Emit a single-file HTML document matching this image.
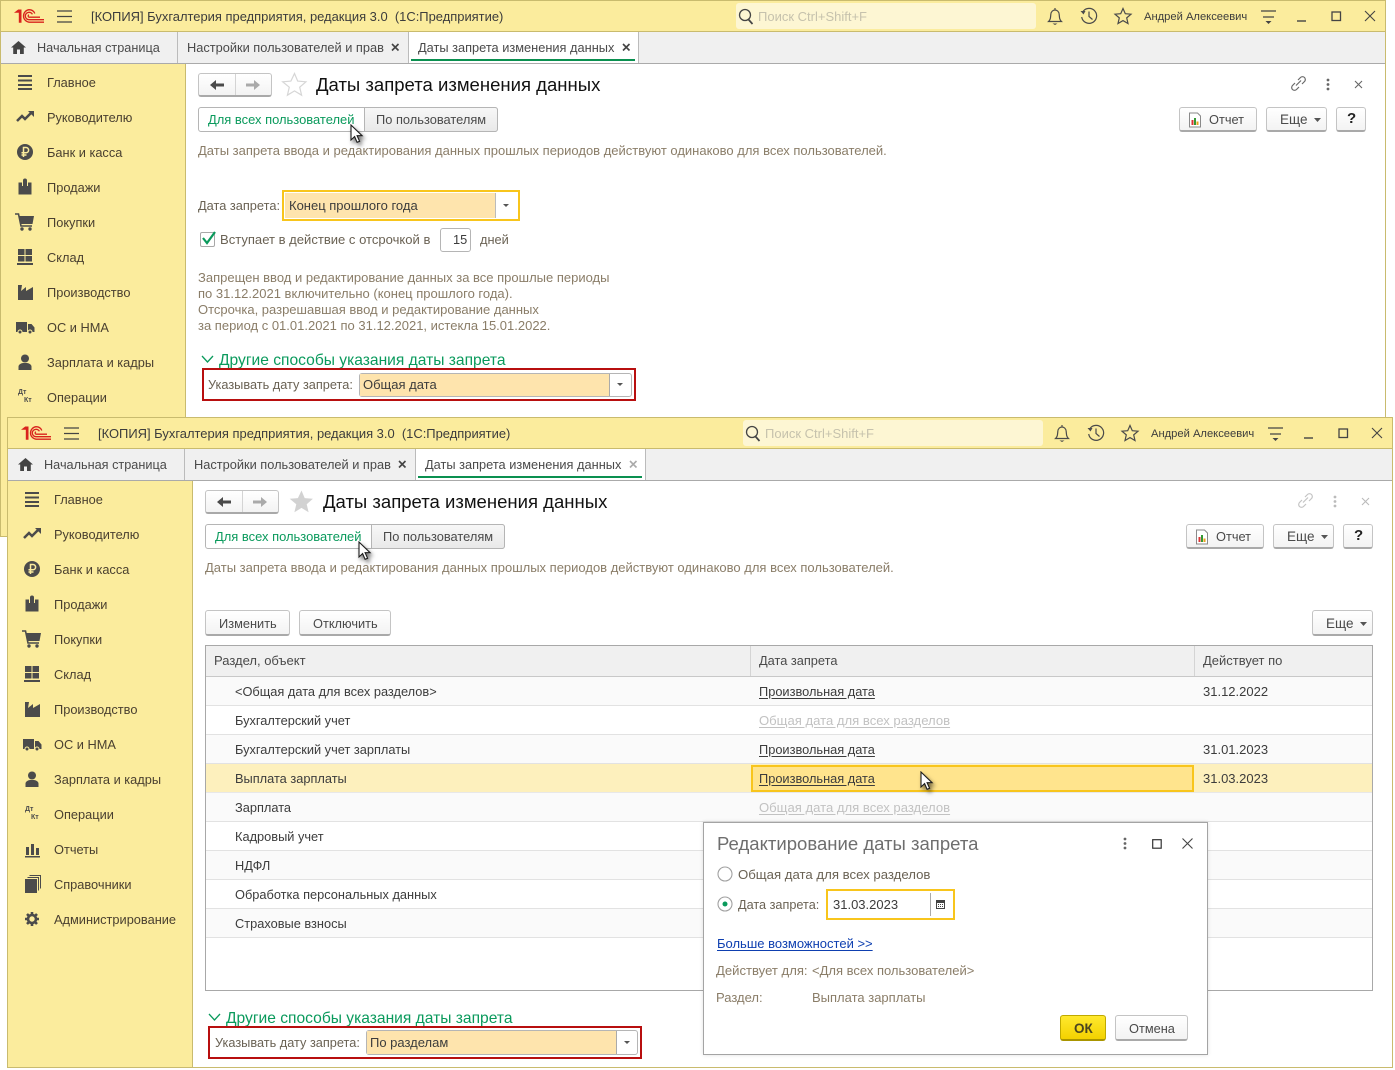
<!DOCTYPE html>
<html lang="ru"><head><meta charset="utf-8"><title>Даты запрета изменения данных</title>
<style>
html,body{margin:0;padding:0;background:#fff;width:1395px;height:1070px;overflow:hidden}
body{position:relative;font-family:"Liberation Sans",Arial,sans-serif;font-size:12.800px;color:#4a4a4a}
.win{position:absolute;width:1386px;background:#fff;overflow:hidden;box-sizing:border-box;border:1px solid #c9bb6e}
.in{position:absolute;left:-1px;top:-1px;width:1386px;height:700px}
.b{position:absolute;box-sizing:border-box}
.t{position:absolute;white-space:nowrap;line-height:16px;height:16px}
.hd{background:#fbec9d}
.tabs{background:#f0f0f0;border-bottom:1px solid #aaa}
.sb{background:#fbec9d;border-right:1px solid #c9bb6e}
.btn{position:absolute;box-sizing:border-box;border:1px solid #c4c4c4;border-bottom:2px solid #a9a9a9;border-radius:3px;background:linear-gradient(#fff,#f3f3f3)}
.nav{color:#4a4030}
.gr{color:#8a7d68;font-size:13px}
.lb{color:#6a6254}
.dk{color:#3c3c3c}
.gn{color:#0a9a5c}
u{text-underline-offset:2px}
svg{position:absolute;overflow:visible}
.ic{fill:#4b4b4b}
.ln{fill:none;stroke:#4a4a4a;stroke-width:1.2}
.cur{filter:drop-shadow(2px 3px 2px rgba(0,0,0,.55))}
.row{position:absolute;left:199px;width:1166px;height:29px;background:#fafafa;border-bottom:1px solid #e2e2e2;box-sizing:border-box}
</style></head><body>
<svg width="0" height="0" style="position:absolute">
<defs>
<symbol id="i1" viewBox="0 0 20 20"><path class="ic" d="M3 3h14v2H3zM3 7.500h14v2H3zM3 12h14v2H3zM3 16h14v2H3z"/></symbol>
<symbol id="i2" viewBox="0 0 20 20"><path d="M2 14l5-5 3 3 6-6" fill="none" stroke="#4b4b4b" stroke-width="2.500"/><path class="ic" d="M13 4h6v6z"/></symbol>
<symbol id="i3" viewBox="0 0 20 20"><circle class="ic" cx="10" cy="10" r="8"/><path d="M8.500 15V5.500h2.500a2.500 2.500 0 0 1 0 5.200H6.500M6.500 13h5" fill="none" stroke="#fbec9d" stroke-width="1.500"/></symbol>
<symbol id="i4" viewBox="0 0 20 20"><path class="ic" d="M3.500 5.500h3.500V9h1V3.500a2 2 0 0 1 4 0V9h1V5.500h3.500V17.500h-13z"/></symbol>
<symbol id="i5" viewBox="0 0 20 20"><path class="ic" d="M4 4h15l-1.500 8H6z"/><path d="M0 2h3.500l2.500 12h11" fill="none" stroke="#4b4b4b" stroke-width="1.600"/><circle class="ic" cx="7" cy="17" r="1.700"/><circle class="ic" cx="15" cy="17" r="1.700"/></symbol>
<symbol id="i6" viewBox="0 0 20 20"><path class="ic" d="M3 2h6.500v6H3zM10.500 2H17v6h-6.500zM3 9h6.500v5.500H3zM10.500 9H17v5.500h-6.500zM2 16h16v2H2z"/></symbol>
<symbol id="i7" viewBox="0 0 20 20"><path class="ic" d="M3 18V3h4l-1 6 5-4v4l7-4v13z"/></symbol>
<symbol id="i8" viewBox="0 0 20 20"><path class="ic" d="M1 5h11v10H1zM13 7h3.500l3 3.500V15H13z"/><circle cx="5" cy="15" r="2" fill="#4b4b4b" stroke="#fbec9d"/><circle cx="15" cy="15" r="2" fill="#4b4b4b" stroke="#fbec9d"/></symbol>
<symbol id="i9" viewBox="0 0 20 20"><circle class="ic" cx="10" cy="6.500" r="4"/><path class="ic" d="M3.500 18v-3.500c0-2 3-3.500 4.500-3.500h4c1.500 0 4.500 1.500 4.500 3.500V18z"/></symbol>
<symbol id="i11" viewBox="0 0 20 20"><path class="ic" d="M4 8h3v8H4zM9 5h3v11H9zM14 9h3v7h-3zM3 17h15v1.500H3z"/></symbol>
<symbol id="i12" viewBox="0 0 20 20"><path class="ic" d="M3 5h12v14H3z"/><path d="M5.500 3.500h11v13M7.500 1.500H18.500v13" fill="none" stroke="#4b4b4b"/></symbol>
<symbol id="i13" viewBox="0 0 20 20"><path d="M10 3v2.500M10 14.500V17M3 10h2.500M14.500 10H17M5 5l1.800 1.800M13.200 13.200L15 15M15 5l-1.800 1.800M6.800 13.200L5 15" stroke="#4b4b4b" stroke-width="2.600"/><circle cx="10" cy="10" r="4" fill="none" stroke="#4b4b4b" stroke-width="2.600"/></symbol>
<symbol id="cur" viewBox="0 0 14 20"><path d="M1 1v15l3.600-3.400 2.500 5.700 2.500-1-2.500-5.600h5z" fill="#fff" stroke="#1c1c1c" stroke-width="1.100"/></symbol>
<symbol id="logo" viewBox="0 0 30 14"><path d="M0 3.800L4.200.5H7.500V13.800H4.800V3.800z" fill="#d9231d"/><path d="M30 13.200H15a6.300 6.300 0 0 1 0-12.500c2.800 0 4.800 1.400 5.800 3.800" fill="none" stroke="#d9231d" stroke-width="1.300"/><path d="M30 10.700H15a3.700 3.700 0 0 1 0-7.400c1.600 0 2.800.8 3.400 2" fill="none" stroke="#d9231d" stroke-width="1.300"/><path d="M26 8.200H15a1.200 1.200 0 0 1 0-2.300" fill="none" stroke="#d9231d" stroke-width="1.300"/></symbol>
<symbol id="bell" viewBox="0 0 20 20"><path class="ln" d="M3.500 15.500c2-2 2-3.500 2.300-7C6 5.500 8 4 10 4s4 1.500 4.200 4.500c.3 3.500.3 5 2.300 7zM10 2v2"/><path class="ic" d="M7.500 17.500h5L10 19z"/></symbol>
<symbol id="hist" viewBox="0 0 20 20"><path class="ln" d="M4 5.500A7.500 7.500 0 1 1 2.700 11M10 5.500V10.500l3.500 3"/><path class="ic" d="M1.500 5h5l-2 3.500z"/></symbol>
<symbol id="star" viewBox="0 0 20 20"><path class="ln" d="M10 2.500l2.300 5.200 5.700.5-4.300 3.700 1.300 5.600L10 14.600 5 17.500l1.300-5.600L2 8.200l5.700-.5z"/></symbol>
<symbol id="rep" viewBox="0 0 14 16"><path d="M1.500 1h8l3 3v11h-11z" fill="#fff" stroke="#8a8a8a"/><path fill="#d33" d="M3.500 8h2v5h-2z"/><path fill="#393" d="M6 6h2v7H6z"/><path fill="#e9a11c" d="M8.500 9.500h2V13h-2z"/></symbol>
</defs></svg>

<!-- BACK WINDOW -->
<div class="win" style="left:0;top:0;height:537px"><div class="in">
<div class="b hd" style="left:0;top:0;width:1386px;height:32px;border-bottom:1px solid #c9bb6e"></div>
<svg style="left:14px;top:9px" width="30" height="14"><use href="#logo" width="30" height="14"/></svg>
<svg style="left:57px;top:10px" width="15" height="13"><path d="M0 1h15M0 6.500h15M0 12h15" stroke="#444" stroke-width="1.300"/></svg>
<div class="t dk" style="left:91px;top:9px;font-size:12.950px">[КОПИЯ] Бухгалтерия предприятия, редакция 3.0&nbsp; (1С:Предприятие)</div>
<div class="b" style="left:736px;top:3px;width:300px;height:26px;background:#fdf6d3;border-radius:3px"></div>
<svg style="left:738px;top:8px" width="16" height="17"><circle cx="7" cy="7" r="5.500" fill="none" stroke="#444" stroke-width="1.300"/><path d="M10.500 11.500l4 4.500" stroke="#444" stroke-width="1.700"/></svg>
<div class="t" style="left:758px;top:9px;font-size:13px;color:#c6c2ad">Поиск Ctrl+Shift+F</div>
<svg style="left:1045px;top:6px" width="20" height="20"><use href="#bell" width="20" height="20"/></svg>
<svg style="left:1079px;top:6px" width="20" height="20"><use href="#hist" width="20" height="20"/></svg>
<svg style="left:1113px;top:6px" width="20" height="20"><use href="#star" width="20" height="20"/></svg>
<div class="t dk" style="left:1144px;top:9px;font-size:11.200px">Андрей Алексеевич</div>
<svg style="left:1261px;top:10px" width="15" height="15"><path d="M0 1h15M2 7h11" stroke="#444" stroke-width="1.200"/><path fill="#444" d="M4.500 11h6l-3 3z"/></svg>
<svg style="left:1296px;top:10px" width="12" height="12"><path d="M1 11h9" stroke="#444" stroke-width="1.400"/></svg>
<svg style="left:1331px;top:11px" width="11" height="11"><rect x="1" y="1" width="8.500" height="8.500" fill="none" stroke="#444" stroke-width="1.300"/></svg>
<svg style="left:1364px;top:10px" width="12" height="12"><path d="M1 1l10 10M11 1L1 11" stroke="#444" stroke-width="1.100"/></svg>

<div class="b tabs" style="left:0;top:32px;width:1386px;height:32px"></div>
<div class="b" style="left:177px;top:32px;width:1px;height:31px;background:#bbb"></div>
<div class="b" style="left:408px;top:32px;width:1px;height:31px;background:#bbb"></div>
<div class="b" style="left:409px;top:32px;width:230px;height:31px;background:#fff;border-right:1px solid #bbb"></div>
<div class="b" style="left:411px;top:59px;width:224px;height:2px;background:#0a9050"></div>
<svg style="left:11px;top:41px" width="15" height="13"><path fill="#444" d="M7.500 0L15 6.500h-2.200V13H9V8.500H6V13H2.200V6.500H0z"/></svg>
<div class="t" style="left:37px;top:40px;font-size:12.700px">Начальная страница</div>
<div class="t" style="left:187px;top:40px">Настройки пользователей и прав</div>
<svg style="left:391px;top:43px" width="9" height="9"><path d="M1 1l6.500 6.500M7.500 1L1 7.500" stroke="#444" stroke-width="1.600"/></svg>
<div class="t" style="left:418px;top:40px">Даты запрета изменения данных</div>
<svg style="left:622px;top:43px" width="9" height="9"><path d="M1 1l6.500 6.500M7.500 1L1 7.500" stroke="#444" stroke-width="1.600"/></svg>

<div class="b sb" style="left:0;top:64px;width:186px;height:480px"></div>
<svg style="left:15px;top:72px" width="20" height="20"><use href="#i1" width="20" height="20"/></svg><div class="t nav" style="left:47px;top:75px">Главное</div>
<svg style="left:15px;top:107px" width="20" height="20"><use href="#i2" width="20" height="20"/></svg><div class="t nav" style="left:47px;top:110px">Руководителю</div>
<svg style="left:15px;top:142px" width="20" height="20"><use href="#i3" width="20" height="20"/></svg><div class="t nav" style="left:47px;top:145px">Банк и касса</div>
<svg style="left:15px;top:177px" width="20" height="20"><use href="#i4" width="20" height="20"/></svg><div class="t nav" style="left:47px;top:180px">Продажи</div>
<svg style="left:15px;top:212px" width="20" height="20"><use href="#i5" width="20" height="20"/></svg><div class="t nav" style="left:47px;top:215px">Покупки</div>
<svg style="left:15px;top:247px" width="20" height="20"><use href="#i6" width="20" height="20"/></svg><div class="t nav" style="left:47px;top:250px">Склад</div>
<svg style="left:15px;top:282px" width="20" height="20"><use href="#i7" width="20" height="20"/></svg><div class="t nav" style="left:47px;top:285px">Производство</div>
<svg style="left:15px;top:317px" width="20" height="20"><use href="#i8" width="20" height="20"/></svg><div class="t nav" style="left:47px;top:320px">ОС и НМА</div>
<svg style="left:15px;top:352px" width="20" height="20"><use href="#i9" width="20" height="20"/></svg><div class="t nav" style="left:47px;top:355px">Зарплата и кадры</div>
<div class="t" style="left:18px;top:389px;font-size:7px;font-weight:bold;line-height:8px;height:8px">Дт</div><div class="t" style="left:24px;top:397px;font-size:7px;font-weight:bold;line-height:8px;height:8px">Кт</div><div class="t nav" style="left:47px;top:390px">Операции</div>

<div class="btn" style="left:198px;top:73px;width:74px;height:24px"></div>
<div class="b" style="left:235px;top:74px;width:1px;height:21px;background:#d4d4d4"></div>
<svg style="left:210px;top:80px" width="14" height="10"><path d="M0 5L6 0V3.500H14V6.500H6V10z" fill="#4a4a4a"/></svg>
<svg style="left:246px;top:80px" width="14" height="10"><path d="M14 5L8 0V3.500H0V6.500H8V10z" fill="#aaa"/></svg>
<svg style="left:282px;top:72px" width="25" height="24"><path d="M12.500 1.500l3.200 7.600 8.200.7-6.200 5.400 1.900 8-7.100-4.300-7.100 4.300 1.900-8L.7 9.800l8.200-.7z" fill="none" stroke="#d6d6d6" stroke-width="1.200"/></svg>
<div class="t" style="left:316px;top:75px;font-size:18.550px;line-height:20px;height:20px;color:#111">Даты запрета изменения данных</div>
<svg style="left:1290px;top:75px" width="17" height="17"><path d="M6 10.500l5-5M5 8L2.500 10.500a2.800 2.800 0 0 0 4 4L9 12M8 5l2.500-2.500a2.800 2.800 0 0 1 4 4L12 9" fill="none" stroke="#6a6a6a" stroke-width="1.200"/></svg>
<svg style="left:1325px;top:78px" width="6" height="13"><circle cx="3" cy="2" r="1.400" fill="#666"/><circle cx="3" cy="6.500" r="1.400" fill="#666"/><circle cx="3" cy="11" r="1.400" fill="#666"/></svg>
<svg style="left:1354px;top:80px" width="9" height="9"><path d="M1 1l7 7M8 1L1 8" stroke="#666" stroke-width="1.100"/></svg>

<div class="b" style="left:198px;top:107px;width:300px;height:25px;border:1px solid #b5b5b5;border-radius:3px;background:#fff"></div>
<div class="b" style="left:364px;top:107px;width:134px;height:25px;border:1px solid #b5b5b5;border-radius:0 3px 3px 0;background:linear-gradient(#f7f7f7,#e9e9e9)"></div>
<div class="t gn" style="left:208px;top:112px;font-size:12.940px">Для всех пользователей</div>
<div class="t" style="left:376px;top:112px;font-size:12.850px">По пользователям</div>
<div class="btn" style="left:1179px;top:107px;width:78px;height:25px"></div>
<svg style="left:1188px;top:112px" width="14" height="16"><use href="#rep" width="14" height="16"/></svg>
<div class="t" style="left:1209px;top:112px">Отчет</div>
<div class="btn" style="left:1266px;top:107px;width:61px;height:25px"></div>
<div class="t" style="left:1280px;top:112px;font-size:13.500px">Еще</div>
<svg style="left:1314px;top:118px" width="7" height="4"><path fill="#555" d="M0 0h7L3.500 4z"/></svg>
<div class="btn" style="left:1336px;top:107px;width:30px;height:25px"></div>
<div class="t" style="left:1347px;top:111px;font-size:15px;font-weight:bold;color:#222">?</div>
<div class="t gr" style="left:198px;top:143px">Даты запрета ввода и редактирования данных прошлых периодов действуют одинаково для всех пользователей.</div>

<div class="t lb" style="left:198px;top:198px">Дата запрета:</div>
<div class="b" style="left:282px;top:190px;width:238px;height:31px;border:2px solid #f8c51c;background:#fff"></div>
<div class="b" style="left:285px;top:193px;width:210px;height:25px;background:#fee4ad"></div>
<div class="b" style="left:495px;top:193px;width:1px;height:25px;background:#bbb"></div>
<svg style="left:503px;top:204px" width="6" height="3"><path fill="#555" d="M0 0h6L3 3z"/></svg>
<div class="t dk" style="left:289px;top:198px;font-size:13px">Конец прошлого года</div>
<div class="b" style="left:200px;top:232px;width:15px;height:15px;border:1px solid #a8a8a8;border-radius:2px;background:#fff"></div>
<svg style="left:200px;top:230px" width="17" height="16"><path d="M3 8l4 5 8-11" fill="none" stroke="#0a9a5c" stroke-width="2.200"/></svg>
<div class="t lb" style="left:220px;top:232px;font-size:13.050px">Вступает в действие с отсрочкой в</div>
<div class="b" style="left:440px;top:228px;width:31px;height:24px;border:1px solid #b5b5b5;border-radius:3px"></div>
<div class="t dk" style="left:453px;top:232px">15</div>
<div class="t lb" style="left:480px;top:232px">дней</div>
<div class="t gr" style="left:198px;top:270px">Запрещен ввод и редактирование данных за все прошлые периоды</div>
<div class="t gr" style="left:198px;top:286px">по 31.12.2021 включительно (конец прошлого года).</div>
<div class="t gr" style="left:198px;top:302px">Отсрочка, разрешавшая ввод и редактирование данных</div>
<div class="t gr" style="left:198px;top:318px">за период с 01.01.2021 по 31.12.2021, истекла 15.01.2022.</div>
<svg style="left:201px;top:355px" width="13" height="9"><path d="M1 1l5.500 6L12 1" fill="none" stroke="#0a9a5c" stroke-width="1.300"/></svg>
<div class="t gn" style="left:219px;top:352px;font-size:15.600px;line-height:18px;height:18px">Другие способы указания даты запрета</div>
<div class="b" style="left:202px;top:368px;width:434px;height:33px;border:2px solid #b80f0f"></div>
<div class="t lb" style="left:208px;top:377px;font-size:12.750px">Указывать дату запрета:</div>
<div class="b" style="left:359px;top:373px;width:273px;height:24px;border:1px solid #b5b5b5;border-radius:3px;background:#fff"></div>
<div class="b" style="left:360px;top:374px;width:249px;height:22px;background:#fee4ad"></div>
<div class="b" style="left:609px;top:374px;width:1px;height:22px;background:#aaa"></div>
<svg style="left:617px;top:383px" width="6" height="3"><path fill="#555" d="M0 0h6L3 3z"/></svg>
<div class="t dk" style="left:363px;top:377px;font-size:13px">Общая дата</div>
</div></div>
<svg class="cur" style="left:350px;top:124px" width="14" height="20"><use href="#cur" width="14" height="20"/></svg>

<!-- FRONT WINDOW -->
<div class="win" style="left:7px;top:417px;height:651px"><div class="in">
<div class="b hd" style="left:0;top:0;width:1386px;height:32px;border-bottom:1px solid #c9bb6e"></div>
<svg style="left:14px;top:9px" width="30" height="14"><use href="#logo" width="30" height="14"/></svg>
<svg style="left:57px;top:10px" width="15" height="13"><path d="M0 1h15M0 6.500h15M0 12h15" stroke="#444" stroke-width="1.300"/></svg>
<div class="t dk" style="left:91px;top:9px;font-size:12.950px">[КОПИЯ] Бухгалтерия предприятия, редакция 3.0&nbsp; (1С:Предприятие)</div>
<div class="b" style="left:736px;top:3px;width:300px;height:26px;background:#fdf6d3;border-radius:3px"></div>
<svg style="left:738px;top:8px" width="16" height="17"><circle cx="7" cy="7" r="5.500" fill="none" stroke="#444" stroke-width="1.300"/><path d="M10.500 11.500l4 4.500" stroke="#444" stroke-width="1.700"/></svg>
<div class="t" style="left:758px;top:9px;font-size:13px;color:#c6c2ad">Поиск Ctrl+Shift+F</div>
<svg style="left:1045px;top:6px" width="20" height="20"><use href="#bell" width="20" height="20"/></svg>
<svg style="left:1079px;top:6px" width="20" height="20"><use href="#hist" width="20" height="20"/></svg>
<svg style="left:1113px;top:6px" width="20" height="20"><use href="#star" width="20" height="20"/></svg>
<div class="t dk" style="left:1144px;top:9px;font-size:11.200px">Андрей Алексеевич</div>
<svg style="left:1261px;top:10px" width="15" height="15"><path d="M0 1h15M2 7h11" stroke="#444" stroke-width="1.200"/><path fill="#444" d="M4.500 11h6l-3 3z"/></svg>
<svg style="left:1296px;top:10px" width="12" height="12"><path d="M1 11h9" stroke="#444" stroke-width="1.400"/></svg>
<svg style="left:1331px;top:11px" width="11" height="11"><rect x="1" y="1" width="8.500" height="8.500" fill="none" stroke="#444" stroke-width="1.300"/></svg>
<svg style="left:1364px;top:10px" width="12" height="12"><path d="M1 1l10 10M11 1L1 11" stroke="#444" stroke-width="1.100"/></svg>

<div class="b tabs" style="left:0;top:32px;width:1386px;height:32px"></div>
<div class="b" style="left:177px;top:32px;width:1px;height:31px;background:#bbb"></div>
<div class="b" style="left:408px;top:32px;width:1px;height:31px;background:#bbb"></div>
<div class="b" style="left:409px;top:32px;width:230px;height:31px;background:#fff;border-right:1px solid #bbb"></div>
<div class="b" style="left:411px;top:59px;width:224px;height:2px;background:#0a9050"></div>
<svg style="left:11px;top:41px" width="15" height="13"><path fill="#444" d="M7.500 0L15 6.500h-2.200V13H9V8.500H6V13H2.200V6.500H0z"/></svg>
<div class="t" style="left:37px;top:40px;font-size:12.700px">Начальная страница</div>
<div class="t" style="left:187px;top:40px">Настройки пользователей и прав</div>
<svg style="left:391px;top:43px" width="9" height="9"><path d="M1 1l6.500 6.500M7.500 1L1 7.500" stroke="#444" stroke-width="1.600"/></svg>
<div class="t" style="left:418px;top:40px">Даты запрета изменения данных</div>
<svg style="left:622px;top:43px" width="9" height="9"><path d="M1 1l6.500 6.500M7.500 1L1 7.500" stroke="#aaa" stroke-width="1.600"/></svg>

<div class="b sb" style="left:0;top:64px;width:186px;height:600px"></div>
<svg style="left:15px;top:72px" width="20" height="20"><use href="#i1" width="20" height="20"/></svg><div class="t nav" style="left:47px;top:75px">Главное</div>
<svg style="left:15px;top:107px" width="20" height="20"><use href="#i2" width="20" height="20"/></svg><div class="t nav" style="left:47px;top:110px">Руководителю</div>
<svg style="left:15px;top:142px" width="20" height="20"><use href="#i3" width="20" height="20"/></svg><div class="t nav" style="left:47px;top:145px">Банк и касса</div>
<svg style="left:15px;top:177px" width="20" height="20"><use href="#i4" width="20" height="20"/></svg><div class="t nav" style="left:47px;top:180px">Продажи</div>
<svg style="left:15px;top:212px" width="20" height="20"><use href="#i5" width="20" height="20"/></svg><div class="t nav" style="left:47px;top:215px">Покупки</div>
<svg style="left:15px;top:247px" width="20" height="20"><use href="#i6" width="20" height="20"/></svg><div class="t nav" style="left:47px;top:250px">Склад</div>
<svg style="left:15px;top:282px" width="20" height="20"><use href="#i7" width="20" height="20"/></svg><div class="t nav" style="left:47px;top:285px">Производство</div>
<svg style="left:15px;top:317px" width="20" height="20"><use href="#i8" width="20" height="20"/></svg><div class="t nav" style="left:47px;top:320px">ОС и НМА</div>
<svg style="left:15px;top:352px" width="20" height="20"><use href="#i9" width="20" height="20"/></svg><div class="t nav" style="left:47px;top:355px">Зарплата и кадры</div>
<div class="t" style="left:18px;top:389px;font-size:7px;font-weight:bold;line-height:8px;height:8px">Дт</div><div class="t" style="left:24px;top:397px;font-size:7px;font-weight:bold;line-height:8px;height:8px">Кт</div><div class="t nav" style="left:47px;top:390px">Операции</div>
<svg style="left:15px;top:422px" width="20" height="20"><use href="#i11" width="20" height="20"/></svg><div class="t nav" style="left:47px;top:425px">Отчеты</div>
<svg style="left:15px;top:457px" width="20" height="20"><use href="#i12" width="20" height="20"/></svg><div class="t nav" style="left:47px;top:460px">Справочники</div>
<svg style="left:15px;top:492px" width="20" height="20"><use href="#i13" width="20" height="20"/></svg><div class="t nav" style="left:47px;top:495px">Администрирование</div>

<div class="btn" style="left:198px;top:73px;width:74px;height:24px"></div>
<div class="b" style="left:235px;top:74px;width:1px;height:21px;background:#d4d4d4"></div>
<svg style="left:210px;top:80px" width="14" height="10"><path d="M0 5L6 0V3.500H14V6.500H6V10z" fill="#4a4a4a"/></svg>
<svg style="left:246px;top:80px" width="14" height="10"><path d="M14 5L8 0V3.500H0V6.500H8V10z" fill="#aaa"/></svg>
<svg style="left:282px;top:72px" width="25" height="24"><path d="M12.500 1.500l3.200 7.600 8.200.7-6.200 5.400 1.900 8-7.100-4.300-7.100 4.300 1.900-8L.7 9.800l8.200-.7z" fill="#d2d2d2"/></svg>
<div class="t" style="left:316px;top:75px;font-size:18.550px;line-height:20px;height:20px;color:#111">Даты запрета изменения данных</div>
<svg style="left:1290px;top:75px" width="17" height="17"><path d="M6 10.500l5-5M5 8L2.500 10.500a2.800 2.800 0 0 0 4 4L9 12M8 5l2.500-2.500a2.800 2.800 0 0 1 4 4L12 9" fill="none" stroke="#c4c4c4" stroke-width="1.200"/></svg>
<svg style="left:1325px;top:78px" width="6" height="13"><circle cx="3" cy="2" r="1.400" fill="#bbb"/><circle cx="3" cy="6.500" r="1.400" fill="#bbb"/><circle cx="3" cy="11" r="1.400" fill="#bbb"/></svg>
<svg style="left:1354px;top:80px" width="9" height="9"><path d="M1 1l7 7M8 1L1 8" stroke="#bbb" stroke-width="1.100"/></svg>

<div class="b" style="left:198px;top:107px;width:300px;height:25px;border:1px solid #b5b5b5;border-radius:3px;background:#fff"></div>
<div class="b" style="left:364px;top:107px;width:134px;height:25px;border:1px solid #b5b5b5;border-radius:0 3px 3px 0;background:linear-gradient(#f7f7f7,#e9e9e9)"></div>
<div class="t gn" style="left:208px;top:112px;font-size:12.940px">Для всех пользователей</div>
<div class="t" style="left:376px;top:112px;font-size:12.850px">По пользователям</div>
<div class="btn" style="left:1179px;top:107px;width:78px;height:25px"></div>
<svg style="left:1188px;top:112px" width="14" height="16"><use href="#rep" width="14" height="16"/></svg>
<div class="t" style="left:1209px;top:112px">Отчет</div>
<div class="btn" style="left:1266px;top:107px;width:61px;height:25px"></div>
<div class="t" style="left:1280px;top:112px;font-size:13.500px">Еще</div>
<svg style="left:1314px;top:118px" width="7" height="4"><path fill="#555" d="M0 0h7L3.500 4z"/></svg>
<div class="btn" style="left:1336px;top:107px;width:30px;height:25px"></div>
<div class="t" style="left:1347px;top:111px;font-size:15px;font-weight:bold;color:#222">?</div>
<div class="t gr" style="left:198px;top:143px">Даты запрета ввода и редактирования данных прошлых периодов действуют одинаково для всех пользователей.</div>

<div class="btn" style="left:198px;top:193px;width:85px;height:26px"></div><div class="t" style="left:212px;top:199px">Изменить</div>
<div class="btn" style="left:292px;top:193px;width:92px;height:26px"></div><div class="t" style="left:306px;top:199px">Отключить</div>
<div class="btn" style="left:1305px;top:193px;width:61px;height:26px"></div><div class="t" style="left:1319px;top:199px;font-size:13.500px">Еще</div>
<svg style="left:1353px;top:205px" width="7" height="4"><path fill="#555" d="M0 0h7L3.500 4z"/></svg>

<div class="b" style="left:198px;top:228px;width:1168px;height:346px;border:1px solid #a8a8a8;background:#fff"></div>
<div class="b" style="left:199px;top:229px;width:1166px;height:31px;background:#f0f0f0;border-bottom:1px solid #c8c8c8"></div>
<div class="b" style="left:743px;top:229px;width:1px;height:30px;background:#d4d4d4"></div>
<div class="b" style="left:1187px;top:229px;width:1px;height:30px;background:#d4d4d4"></div>
<div class="t" style="left:207px;top:236px;font-size:13px">Раздел, объект</div>
<div class="t" style="left:752px;top:236px">Дата запрета</div>
<div class="t" style="left:1196px;top:236px;font-size:13px">Действует по</div>

<div class="row" style="top:260px"></div>
<div class="row" style="top:289px;background:#fff"></div>
<div class="row" style="top:318px"></div>
<div class="row" style="top:347px;background:#fdf0bd;border-bottom-color:#e8e8e8"></div>
<div class="row" style="top:376px"></div>
<div class="row" style="top:405px;background:#fff"></div>
<div class="row" style="top:434px"></div>
<div class="row" style="top:463px;background:#fff"></div>
<div class="row" style="top:492px"></div>
<div class="b" style="left:744px;top:348px;width:443px;height:27px;background:#ffe48d;border:2px solid #f8c51c"></div>

<div class="t dk" style="left:228px;top:267px">&lt;Общая дата для всех разделов&gt;</div>
<div class="t dk" style="left:228px;top:296px">Бухгалтерский учет</div>
<div class="t dk" style="left:228px;top:325px">Бухгалтерский учет зарплаты</div>
<div class="t dk" style="left:228px;top:354px">Выплата зарплаты</div>
<div class="t dk" style="left:228px;top:383px">Зарплата</div>
<div class="t dk" style="left:228px;top:412px">Кадровый учет</div>
<div class="t dk" style="left:228px;top:441px">НДФЛ</div>
<div class="t dk" style="left:228px;top:470px">Обработка персональных данных</div>
<div class="t dk" style="left:228px;top:499px">Страховые взносы</div>

<div class="t dk" style="left:752px;top:267px"><u>Произвольная дата</u></div>
<div class="t" style="left:752px;top:296px;font-size:13.100px;color:#c2c2c2"><u>Общая дата для всех разделов</u></div>
<div class="t dk" style="left:752px;top:325px"><u>Произвольная дата</u></div>
<div class="t dk" style="left:752px;top:354px"><u>Произвольная дата</u></div>
<div class="t" style="left:752px;top:383px;font-size:13.100px;color:#c2c2c2"><u>Общая дата для всех разделов</u></div>
<div class="t dk" style="left:1196px;top:267px;font-size:13px">31.12.2022</div>
<div class="t dk" style="left:1196px;top:325px;font-size:13px">31.01.2023</div>
<div class="t dk" style="left:1196px;top:354px;font-size:13px">31.03.2023</div>

<svg style="left:201px;top:596px" width="13" height="9"><path d="M1 1l5.500 6L12 1" fill="none" stroke="#0a9a5c" stroke-width="1.300"/></svg>
<div class="t gn" style="left:219px;top:593px;font-size:15.600px;line-height:18px;height:18px">Другие способы указания даты запрета</div>
<div class="b" style="left:201px;top:609px;width:434px;height:33px;border:2px solid #b80f0f"></div>
<div class="t lb" style="left:208px;top:618px;font-size:12.750px">Указывать дату запрета:</div>
<div class="b" style="left:359px;top:613px;width:272px;height:25px;border:1px solid #b5b5b5;border-radius:3px;background:#fff"></div>
<div class="b" style="left:360px;top:614px;width:249px;height:23px;background:#fee4ad"></div>
<div class="b" style="left:609px;top:614px;width:1px;height:23px;background:#aaa"></div>
<svg style="left:617px;top:624px" width="6" height="3"><path fill="#555" d="M0 0h6L3 3z"/></svg>
<div class="t dk" style="left:363px;top:618px;font-size:13px">По разделам</div>
</div></div>
<svg class="cur" style="left:358px;top:541px" width="14" height="20"><use href="#cur" width="14" height="20"/></svg>
<svg class="cur" style="left:920px;top:771px" width="14" height="20"><use href="#cur" width="14" height="20"/></svg>

<!-- DIALOG -->
<div class="b" style="left:703px;top:822px;width:505px;height:233px;background:#fff;border:1px solid #a4a4a4;box-shadow:0 0 4px rgba(0,0,0,.12)"></div>
<div class="t" style="left:717px;top:834px;font-size:18.550px;line-height:20px;height:20px;color:#6e6e6e">Редактирование даты запрета</div>
<svg style="left:1122px;top:837px" width="6" height="13"><circle cx="3" cy="2" r="1.400" fill="#666"/><circle cx="3" cy="6.500" r="1.400" fill="#666"/><circle cx="3" cy="11" r="1.400" fill="#666"/></svg>
<svg style="left:1152px;top:839px" width="10" height="10"><rect x=".7" y=".7" width="8.500" height="8.500" fill="none" stroke="#333" stroke-width="1.200"/></svg>
<svg style="left:1182px;top:838px" width="11" height="11"><path d="M.5.500l10 10M10.500.500l-10 10" stroke="#444" stroke-width="1.100"/></svg>
<svg style="left:717px;top:866px" width="16" height="16"><circle cx="8" cy="8" r="7" fill="#fff" stroke="#a0a0a0" stroke-width="1.100"/></svg>
<div class="t lb" style="left:738px;top:867px;font-size:13.200px">Общая дата для всех разделов</div>
<svg style="left:717px;top:896px" width="16" height="16"><circle cx="8" cy="8" r="7" fill="#fff" stroke="#a0a0a0" stroke-width="1.100"/><circle cx="8" cy="8" r="2.500" fill="#0a9a5c"/></svg>
<div class="t lb" style="left:738px;top:897px;font-size:12.700px">Дата запрета:</div>
<div class="b" style="left:826px;top:889px;width:129px;height:31px;border:2px solid #f8c51c;background:#fff"></div>
<div class="b" style="left:930px;top:893px;width:1px;height:23px;background:#aaa"></div>
<svg style="left:936px;top:899px" width="9" height="10"><path fill="#444" d="M0 1h9v9H0z"/><path fill="#fff" d="M1 4h7v5H1z"/><path fill="#444" d="M2 5h1v1H2zM4 5h1v1H4zM6 5h1v1H6zM2 7h1v1H2zM4 7h1v1H4zM6 7h1v1H6z"/></svg>
<div class="t dk" style="left:833px;top:897px;font-size:13px">31.03.2023</div>
<div class="t" style="left:717px;top:936px;font-size:13px;color:#0e3fb0"><u>Больше возможностей &gt;&gt;</u></div>
<div class="t gr" style="left:716px;top:963px;font-size:13.100px">Действует для:</div>
<div class="t gr" style="left:812px;top:963px">&lt;Для всех пользователей&gt;</div>
<div class="t gr" style="left:716px;top:990px">Раздел:</div>
<div class="t gr" style="left:812px;top:990px">Выплата зарплаты</div>
<div class="b" style="left:1060px;top:1015px;width:46px;height:26px;border:1px solid #bfa900;border-bottom:2px solid #a99500;border-radius:3px;background:linear-gradient(#ffe92e,#f3d200)"></div>
<div class="t" style="left:1074px;top:1021px;font-weight:bold;font-size:13.500px;color:#4a4520">ОК</div>
<div class="btn" style="left:1115px;top:1015px;width:73px;height:26px"></div>
<div class="t" style="left:1129px;top:1021px">Отмена</div>
</body></html>
